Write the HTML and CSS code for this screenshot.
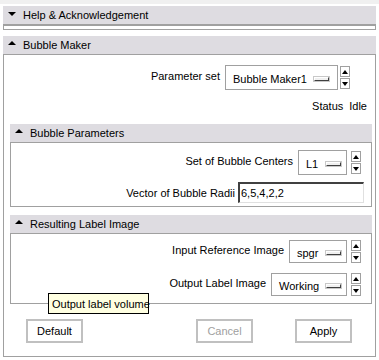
FILE: index.html
```html
<!DOCTYPE html>
<html>
<head>
  <title>Bubble Maker</title>
  <link rel="stylesheet" href="styles.css">
</head>
<body>
  <div class="top-strip"></div>
  <div class="page">
    <div class="section">
      <div class="section-head"><span class="arrow down"></span>Help &amp; Acknowledgement</div>
      <div class="section-body collapsed"></div>
    </div>

    <div class="section main">
      <div class="section-head"><span class="arrow up"></span>Bubble Maker</div>
      <div class="section-body">
        <div class="row param-row">
          <label>Parameter set</label>
          <div class="menu w-param"><span>Bubble Maker1</span><span class="menu-ind"></span></div>
          <div class="spin"><div class="spin-btn"><span class="tri up"></span></div><div class="spin-btn"><span class="tri down"></span></div></div>
        </div>
        <div class="status-row">
          <span>Status</span><span>Idle</span>
        </div>

        <div class="section inner">
          <div class="section-head"><span class="arrow up"></span>Bubble Parameters</div>
          <div class="section-body">
            <div class="row sub-row first">
              <label>Set of Bubble Centers</label>
              <div class="menu w-centers"><span>L1</span><span class="menu-ind"></span></div>
              <div class="spin"><div class="spin-btn"><span class="tri up"></span></div><div class="spin-btn"><span class="tri down"></span></div></div>
            </div>
            <div class="row entry-row">
              <label>Vector of Bubble Radii</label>
              <div class="entry">6,5,4,2,2</div>
            </div>
          </div>
        </div>

        <div class="section inner result">
          <div class="section-head"><span class="arrow up"></span>Resulting Label Image</div>
          <div class="section-body">
            <div class="row sub-row first">
              <label>Input Reference Image</label>
              <div class="menu w-input"><span>spgr</span><span class="menu-ind"></span></div>
              <div class="spin"><div class="spin-btn"><span class="tri up"></span></div><div class="spin-btn"><span class="tri down"></span></div></div>
            </div>
            <div class="row sub-row second">
              <label>Output Label Image</label>
              <div class="menu w-output"><span>Working</span><span class="menu-ind"></span></div>
              <div class="spin"><div class="spin-btn"><span class="tri up"></span></div><div class="spin-btn"><span class="tri down"></span></div></div>
            </div>
          </div>
          <div class="tooltip">Output label volume</div>
        </div>

        <div class="buttons">
          <button class="btn">Default</button>
          <button class="btn disabled cancel">Cancel</button>
          <button class="btn apply">Apply</button>
        </div>
      </div>
    </div>
  </div>
</body>
</html>
```

FILE: styles.css
```css
body {
  margin: 0;
  background-color: #fff;
  font-family: "Liberation Sans", Arial, sans-serif;
  font-size: 11px;
  color: #000;
}

.top-strip {
  height: 4px;
  background-color: #f0f0f0;
}

.page {
  padding: 2px 3px 0 3px;
}

.section-head {
  height: 18px;
  line-height: 18px;
  background-color: #dedce1;
  display: flex;
  align-items: center;
}

.arrow {
  width: 0;
  height: 0;
  margin: 0 7px 0 5px;
  border-left: 4px solid transparent;
  border-right: 4px solid transparent;
}

.arrow.down {
  border-top: 4px solid #000;
  margin-top: -3px;
}

.arrow.up {
  border-bottom: 4px solid #000;
  margin-top: -5px;
}

.section-body {
  border: 1px solid #a0a0a0;
}

.section-body.collapsed {
  height: 3px;
  border-top-width: 2px;
}

.section.main {
  margin-top: 6px;
}

.main > .section-body {
  padding-bottom: 13px;
}

.row {
  display: flex;
  justify-content: flex-end;
  align-items: center;
  white-space: nowrap;
}

.row label {
  margin-right: 5px;
  margin-top: -4px;
}

.param-row {
  margin-top: 10px;
  height: 25px;
  padding-right: 25px;
}

.status-row {
  margin-top: 8px;
  height: 16px;
  line-height: 16px;
  display: flex;
  justify-content: flex-end;
  padding-right: 8px;
}

.status-row span + span {
  margin-left: 6px;
}

.menu {
  height: 23px;
  border: 1px solid #a0a0a0;
  background-color: #fff;
  display: flex;
  align-items: center;
  justify-content: space-between;
  padding: 1px 8px 0 7px;
  box-sizing: border-box;
}

.menu span:first-child {
  margin-top: 2px;
}

.menu-ind {
  width: 15px;
  height: 4px;
  border-top: 1px solid #fff;
  border-left: 1px solid #fff;
  border-right: 1px solid #404040;
  border-bottom: 1px solid #404040;
  background-color: #f0f0f0;
  box-sizing: border-box;
  outline: 1px solid #c8c8c8;
  margin-top: 2px;
  flex-shrink: 0;
}

.w-param { width: 113px; height: 25px; }
.w-centers { width: 49px; height: 25px; padding-right: 5px; }
.w-input { width: 58px; padding-right: 5px; }
.w-output { width: 76px; padding-right: 5px; }

.spin {
  width: 10px;
  margin-left: 2px;
  display: flex;
  flex-direction: column;
  gap: 1px;
}

.spin-btn {
  border: 1px solid #a0a0a0;
  background-color: #fff;
  display: flex;
  align-items: center;
  justify-content: center;
  box-sizing: border-box;
  height: 11px;
}

.tri {
  width: 0;
  height: 0;
  border-left: 3px solid transparent;
  border-right: 3px solid transparent;
}

.tri.up { border-bottom: 4px solid #000; }
.tri.down { border-top: 4px solid #000; }

.section.inner {
  margin: 10px 3px 0 6px;
}

.section.inner.result {
  margin-top: 8px;
  position: relative;
}

.inner .section-body {
  padding-bottom: 3px;
}

.result .section-body {
  padding-bottom: 7px;
}

.sub-row {
  padding-right: 10px;
}

.sub-row .spin {
  margin-left: 4px;
}

.sub-row.first {
  margin-top: 7px;
}

.result .sub-row.first {
  margin-top: 6px;
}

.sub-row.second {
  margin-top: 10px;
}

.entry-row {
  margin-top: 7px;
  padding-right: 7px;
}

.entry-row label {
  margin-right: 3px;
  margin-top: 0;
}

.entry {
  width: 126px;
  height: 21px;
  line-height: 19px;
  box-sizing: border-box;
  border-top: 2px solid #404040;
  border-left: 2px solid #404040;
  border-right: 1px solid #e0e0e0;
  border-bottom: 1px solid #e0e0e0;
  padding-left: 1px;
}

.tooltip {
  position: absolute;
  left: 38px;
  top: 78px;
  background-color: #ffffe1;
  border: 1px solid #000;
  height: 21px;
  line-height: 20px;
  padding: 0 3px;
  box-sizing: border-box;
  width: 101px;
  white-space: nowrap;
}

.buttons {
  display: flex;
  margin-top: 15px;
  padding-left: 22px;
}

.btn {
  width: 57px;
  height: 24px;
  background-color: #fff;
  border: 2px solid #c0c0c0;
  font-family: "Liberation Sans", Arial, sans-serif;
  font-size: 11px;
  color: #000;
  padding: 0;
}

.btn.cancel {
  margin-left: 113px;
  color: #a0a0a0;
}

.btn.apply {
  margin-left: 42px;
}
```
